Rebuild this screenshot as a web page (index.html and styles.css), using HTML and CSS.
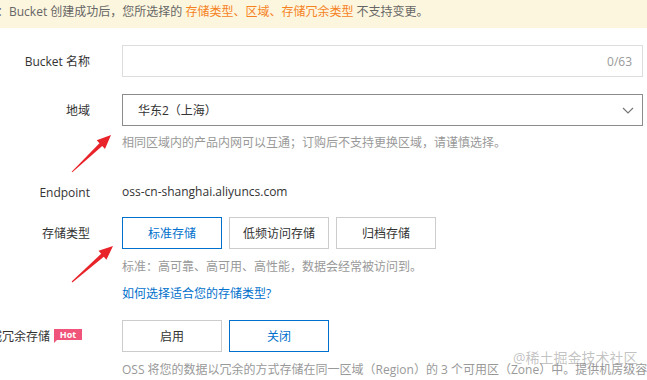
FILE: index.html
```html
<!DOCTYPE html>
<html>
  <head>
    <meta charset='utf-8' />
    <title>创建 Bucket</title>
    <link rel="stylesheet" href="styles.css">
  </head>
  <body>
    <div class='notice'>
      <span class='notice-text'>提示：Bucket 创建成功后，您所选择的 <em>存储类型、区域、存储冗余类型</em> 不支持变更。</span>
    </div>
    <main class='form'>
      <div class='row'>
        <div class='label'>Bucket 名称</div>
        <div class='control'>
          <div class='input'><span class='counter'>0/63</span></div>
        </div>
      </div>
      <div class='row'>
        <div class='label'>地域</div>
        <div class='control'>
          <div class='select'>
            <span>华东2（上海）</span>
            <svg class='chevron' width='12' height='7' viewBox='0 0 12 7'>
              <path d='M1 1 L6 6 L11 1' fill='none' stroke='#777' stroke-width='1.2' />
            </svg>
          </div>
          <div class='help'>相同区域内的产品内网可以互通；订购后不支持更换区域，请谨慎选择。</div>
        </div>
      </div>
      <div class='row row-wide'>
        <div class='label'>Endpoint</div>
        <div class='control value'>oss-cn-shanghai.aliyuncs.com</div>
      </div>
      <div class='row row-tight'>
        <div class='label'>存储类型</div>
        <div class='control'>
          <div class='options'>
            <div class='option selected'>标准存储</div>
            <div class='option'>低频访问存储</div>
            <div class='option'>归档存储</div>
          </div>
          <div class='help spaced'>标准：高可靠、高可用、高性能，数据会经常被访问到。</div>
          <a class='link' href='#'>如何选择适合您的存储类型?</a>
        </div>
      </div>
      <div class='row'>
        <div class='label label-badge'>同城冗余存储<span class='hot'>Hot</span></div>
        <div class='control'>
          <div class='options'>
            <div class='option'>启用</div>
            <div class='option selected'>关闭</div>
          </div>
          <div class='help spaced nowrap'>OSS 将您的数据以冗余的方式存储在同一区域（Region）的 3 个可用区（Zone）中。提供机房级容灾能力。</div>
        </div>
      </div>
    </main>
    <svg class='arrows' width='647' height='380' viewBox='0 0 647 380'>
      <polygon points='71.66,171.64 99.46,143.19 96.71,140.29 111,135 104.97,148.99 102.22,146.09 72.34,172.36' />
      <polygon points='71.67,281.62 101.16,253.74 98.52,250.73 113,246 106.44,259.75 103.80,256.74 72.33,282.38' />
    </svg>
    <div class='watermark'>@稀土掘金技术社区</div>
  </body>
</html>
```

FILE: styles.css
```css
* {
  box-sizing: border-box;
}
body, html {
  margin: 0;
  padding: 0;
  width: 647px;
  height: 380px;
  overflow: hidden;
}
body {
  position: relative;
  background: #fff;
  font-family: "Open Sans", "Noto Sans CJK SC", sans-serif;
  font-size: 12px;
  color: #333;
}
.notice {
  height: 28px;
  background: #fdf6de;
  line-height: 24px;
  white-space: nowrap;
  overflow: hidden;
  color: #666;
}
.notice-text {
  display: inline-block;
  margin-left: -27px;
}
.notice em {
  font-style: normal;
  color: #f5821f;
}
.form {
  padding-right: 4px;
}
.row {
  display: flex;
  align-items: flex-start;
  gap: 32px;
  margin-top: 17px;
}
.row-wide {
  margin-top: 24px;
}
.row-tight {
  margin-top: 9px;
}
.label {
  flex: 0 0 90px;
  min-width: 0;
  display: flex;
  justify-content: flex-end;
  align-items: center;
  height: 32px;
  white-space: nowrap;
  color: #333;
}
.label-badge {
  padding-right: 8px;
}
.hot {
  position: relative;
  flex-shrink: 0;
  margin-left: 4px;
  margin-top: -4px;
  width: 28px;
  height: 11px;
  line-height: 11px;
  text-align: center;
  background: #f0547a;
  color: #fff;
  font-size: 9px;
  font-weight: bold;
}
.hot::after {
  content: '';
  position: absolute;
  left: 0;
  bottom: -3px;
  border-top: 3px solid #f0547a;
  border-right: 3px solid transparent;
}
.control {
  flex: 1;
  min-width: 0;
}
.value {
  line-height: 32px;
}
.input, .select {
  height: 32px;
  display: flex;
  align-items: center;
}
.input {
  border: 1px solid #ddd;
  justify-content: flex-end;
  padding-right: 10px;
}
.counter {
  color: #999;
}
.select {
  border: 1px solid #8c8c8c;
  justify-content: space-between;
  padding: 0 8px 0 15px;
}
.help {
  margin-top: 8px;
  line-height: 18px;
  color: #999;
}
.spaced {
  margin-top: 9px;
}
.nowrap {
  white-space: nowrap;
}
.link {
  display: block;
  margin-top: 9px;
  line-height: 18px;
  color: #0070cc;
  text-decoration: none;
}
.options {
  display: flex;
  gap: 7px;
}
.option {
  width: 100px;
  height: 32px;
  border: 1px solid #ccc;
  display: flex;
  align-items: center;
  justify-content: center;
  color: #333;
}
.option.selected {
  border-color: #0070cc;
  color: #0070cc;
}
.arrows {
  position: absolute;
  left: 0;
  top: 0;
  pointer-events: none;
  fill: #e8232a;
}
.watermark {
  position: absolute;
  left: 513px;
  top: 347px;
  font-size: 14px;
  color: rgba(120, 120, 120, 0.45);
  white-space: nowrap;
  pointer-events: none;
}
```
